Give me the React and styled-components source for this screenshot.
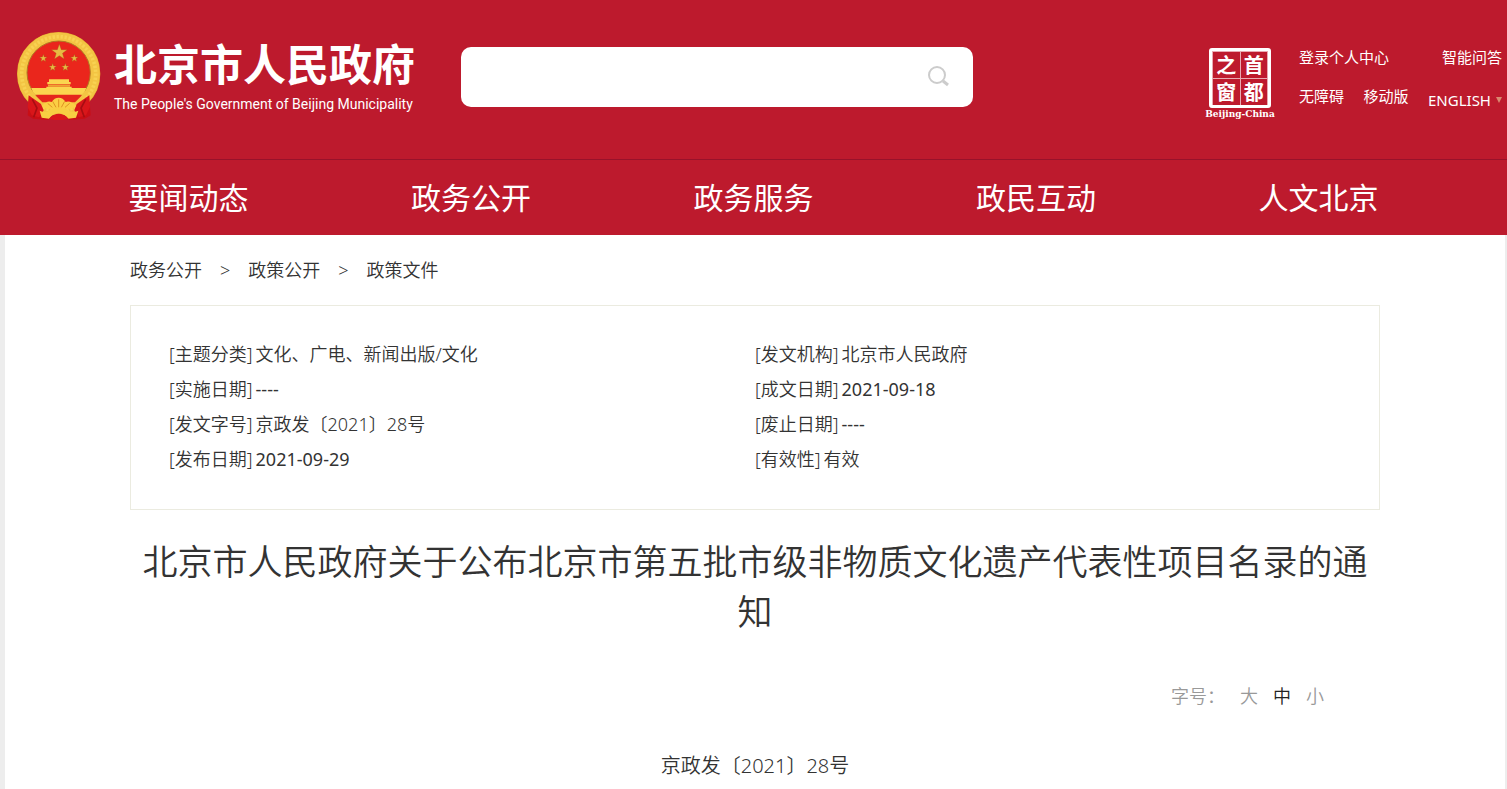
import React, { useState } from "react";
import styled, { createGlobalStyle } from "styled-components";

const red = "#bd1a2d";

const GlobalStyle = createGlobalStyle`
  *, *::before, *::after { box-sizing: border-box; }
  html { background: #ededed; }
  body {
    margin: 0;
    color: #333;
    font: 350 18px/35px "Noto Sans", "Noto Sans CJK SC", sans-serif;
  }
  a { color: inherit; text-decoration: none; }
  svg { flex: none; }
  button { border: 0; padding: 0; background: none; font: inherit; cursor: pointer; }
`;

const Header = styled.header`
  background: ${red};
  color: #fff;
  font-weight: 400;
`;

const TopBar = styled.div`
  display: flex;
  align-items: flex-start;
  min-height: 160px;
  padding: 32px 5px 0 17px;
  border-bottom: 1px solid #98122a;
`;

const Brand = styled.a`
  display: flex;
  gap: 13px;
  flex: none;
  width: 404px;
`;

const BrandText = styled.span`
  display: flex;
  flex-direction: column;
  padding-top: 5px;
  white-space: nowrap;
`;

const BrandName = styled.strong`
  font: 700 43px/50px "Noto Sans CJK SC", sans-serif;
`;

const BrandSub = styled.span`
  font: 400 14px/34px Roboto, sans-serif;
`;

const Search = styled.form`
  display: flex;
  align-items: center;
  flex: none;
  width: 34.5%;
  height: 60px;
  margin: 15px 0 0 40px;
  padding-right: 23px;
  border-radius: 10px;
  background: #fff;
`;

const SearchInput = styled.input`
  flex: 1;
  min-width: 0;
  height: 100%;
  padding: 0 20px;
  border: 0;
  outline: 0;
  background: transparent;
  font: inherit;
`;

const SearchButton = styled.button`
  display: flex;
`;

const Tools = styled.div`
  display: flex;
  gap: 25px;
  margin-left: auto;
  padding-top: 8px;
`;

const Seal = styled.a`
  display: flex;
  flex-direction: column;
  align-items: center;
  width: 68px;
  padding-top: 8px;
  font: 700 9px/12px "DejaVu Serif", serif;
  white-space: nowrap;
`;

const SealFrame = styled.span`
  display: grid;
  grid-template-columns: 1fr 1fr;
  gap: 1px;
  width: 62px;
  height: 60px;
  padding: 1px;
  border: 3px solid #fff;
  border-radius: 3px;
  background: #e9a9b1;
`;

const SealChar = styled.span`
  display: flex;
  align-items: center;
  justify-content: center;
  background: ${red};
  font: 700 20px/26px "Noto Sans CJK SC", sans-serif;
`;

const Links = styled.nav`
  width: 203px;
  font: 400 15px/34px "Noto Sans", "Noto Sans CJK SC", sans-serif;
`;

const LinkRow = styled.div`
  display: flex;
  align-items: flex-start;
  justify-content: space-between;
  min-height: 39px;
  white-space: nowrap;
`;

const English = styled.a`
  display: flex;
  align-items: center;
  gap: 5px;
  padding-top: 4px;
`;

const Caret = styled.span`
  border: 3px solid transparent;
  border-top: 6px solid #d98a70;
  border-bottom: 0;
`;

const MainNav = styled.nav`
  display: flex;
  justify-content: space-between;
  max-width: 1250px;
  margin: 0 auto;
  font-size: 30px;
  line-height: 75px;
`;

const Panel = styled.main`
  max-width: 1500px;
  min-height: calc(100vh - 235px);
  margin: 0 2px 0 5px;
  background: #fff;
`;

const Content = styled.div`
  max-width: 1250px;
  margin: 0 auto;
`;

const Crumbs = styled.nav`
  display: flex;
  gap: 18px;
  line-height: 70px;
`;

const Info = styled.dl`
  display: grid;
  grid-template-columns: 1fr 1fr;
  margin: 0;
  padding: 31px 38px 32px;
  border: 1px solid #ebebe0;
`;

const Field = styled.div`
  display: flex;
  gap: 3px;
`;

const Value = styled.dd`
  margin: 0;
  font-weight: ${(p) => (p.$numeric ? 400 : 350)};
`;

const Title = styled.h1`
  margin: 27px 0 42px;
  font-size: 35px;
  font-weight: 350;
  line-height: 50px;
  text-align: center;
`;

const SizeBar = styled.div`
  display: flex;
  justify-content: flex-end;
  gap: 15px;
  padding-right: 56px;
  color: #999;
`;

const SizeButton = styled.button`
  color: ${(p) => (p.$active ? "#222" : "#999")};
`;

const DocNumber = styled.p`
  margin: 34px 0;
  font-size: 20px;
  text-align: center;
`;

const starPoints = (cx, cy, r) =>
  Array.from({ length: 10 }, (_, i) => {
    const a = (Math.PI / 5) * i - Math.PI / 2;
    const d = i % 2 ? r * 0.4 : r;
    return `${cx + d * Math.cos(a)},${cy + d * Math.sin(a)}`;
  }).join(" ");

const Emblem = () => (
  <svg width="84" height="88" viewBox="0 0 252 264" aria-hidden="true">
    <path d="M38 184L32 250L48 260L94 264L103 237L147 237L156 264L203 260L221 250L216 184Z" fill="#c90e16" />
    <circle cx="125" cy="125" r="108" fill="none" stroke="#e3aa30" strokeWidth="34" />
    <circle cx="125" cy="125" r="109" fill="none" stroke="#f3c443" strokeWidth="29" />
    <circle cx="125" cy="125" r="111" fill="none" stroke="#f8d252" strokeWidth="11" strokeDasharray="7 5" />
    <circle cx="125" cy="122" r="95" fill="#ea261c" stroke="#b17924" strokeWidth="3" />
    <g fill="#e7bb43" stroke="#a94b19" strokeWidth="1">
      <polygon points={starPoints(127, 61, 25)} />
      <polygon points={starPoints(79, 79, 12)} />
      <polygon points={starPoints(172, 79, 12)} />
      <polygon points={starPoints(107, 106, 12)} />
      <polygon points={starPoints(145, 106, 12)} />
    </g>
    <g fill="#fbd54f">
      <path d="M96 142H156V150H161V157H91V150H96Z" />
      <path d="M93 158H159V164H93Z" fill="#efa331" />
      <path d="M88 164H164V168H208Q204 181 195 188H55Q46 181 43 168H88Z" />
    </g>
    <path d="M55 190H195L174 211H76Z" fill="#e5261c" />
    <path d="M35 190L72 216L80 235L66 256L44 250L32 225Z" fill="#d9161a" />
    <path d="M217 190L179 216L172 235L186 256L207 250L219 225Z" fill="#d9161a" />
    <path d="M46 202L60 228L50 256M206 202L192 228L202 256" fill="none" stroke="#a80d12" strokeWidth="5" />
    <path d="M74 222Q90 204 104 210Q112 197 125 197Q138 197 146 210Q160 204 178 222L164 230H88Z" fill="#fbcf44" />
    <path d="M125 226V202M117 226L107 208M133 226L143 208M106 226L92 214M144 226L158 214" stroke="#e09322" strokeWidth="3" />
    <path d="M68 236Q88 246 99 233Q125 225 151 233Q163 246 184 236L177 257L153 260Q139 242 125 243Q111 242 96 260L74 257Z" fill="#f8ce42" />
    <path d="M96 260Q125 230 155 260L139 264H111Z" fill="#d9161a" />
  </svg>
);

const SearchIcon = () => (
  <svg width="22" height="22" viewBox="0 0 22 22" fill="none" stroke="#ccc" strokeWidth="2" aria-hidden="true">
    <circle cx="9" cy="9" r="8" />
    <path d="M15 15L20 19" strokeWidth="3" />
  </svg>
);

const sections = ["要闻动态", "政务公开", "政务服务", "政民互动", "人文北京"];

const fields = [
  ["主题分类", "文化、广电、新闻出版/文化"],
  ["发文机构", "北京市人民政府"],
  ["实施日期", "----"],
  ["成文日期", "2021-09-18"],
  ["发文字号", "京政发〔2021〕28号"],
  ["废止日期", "----"],
  ["发布日期", "2021-09-29"],
  ["有效性", "有效"],
];

export default function App() {
  const [size, setSize] = useState("中");
  return (
    <>
      <GlobalStyle />
      <Header>
        <TopBar>
          <Brand href="#">
            <Emblem />
            <BrandText>
              <BrandName>北京市人民政府</BrandName>
              <BrandSub>The People's Government of Beijing Municipality</BrandSub>
            </BrandText>
          </Brand>
          <Search role="search" onSubmit={(e) => e.preventDefault()}>
            <SearchInput type="text" aria-label="搜索" />
            <SearchButton type="submit" aria-label="搜索">
              <SearchIcon />
            </SearchButton>
          </Search>
          <Tools>
            <Seal href="#">
              <SealFrame>
                {["之", "首", "窗", "都"].map((c) => (
                  <SealChar key={c}>{c}</SealChar>
                ))}
              </SealFrame>
              Beijing-China
            </Seal>
            <Links>
              <LinkRow>
                <a href="#">登录个人中心</a>
                <a href="#">智能问答</a>
              </LinkRow>
              <LinkRow>
                <a href="#">无障碍</a>
                <a href="#">移动版</a>
                <English href="#">
                  ENGLISH
                  <Caret />
                </English>
              </LinkRow>
            </Links>
          </Tools>
        </TopBar>
        <MainNav>
          {sections.map((s) => (
            <a key={s} href="#">{s}</a>
          ))}
        </MainNav>
      </Header>
      <Panel>
        <Content>
          <Crumbs>
            <a href="#">政务公开</a>
            <span>&gt;</span>
            <a href="#">政策公开</a>
            <span>&gt;</span>
            <a href="#">政策文件</a>
          </Crumbs>
          <Info>
            {fields.map(([label, value]) => (
              <Field key={label}>
                <dt>[{label}]</dt>
                <Value $numeric={/^[\d-]+$/.test(value)}>{value}</Value>
              </Field>
            ))}
          </Info>
          <Title>北京市人民政府关于公布北京市第五批市级非物质文化遗产代表性项目名录的通知</Title>
          <SizeBar>
            <span>字号：</span>
            {["大", "中", "小"].map((s) => (
              <SizeButton key={s} type="button" $active={s === size} onClick={() => setSize(s)}>
                {s}
              </SizeButton>
            ))}
          </SizeBar>
          <DocNumber>京政发〔2021〕28号</DocNumber>
        </Content>
      </Panel>
    </>
  );
}
